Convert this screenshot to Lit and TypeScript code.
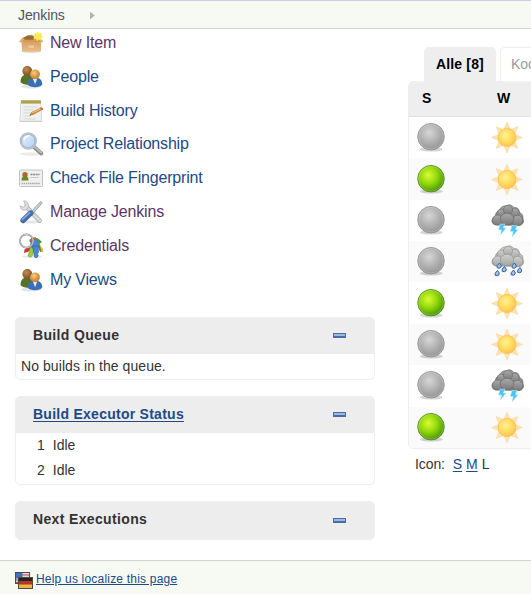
import { LitElement, html, css, svg } from "lit";
import { customElement } from "lit/decorators.js";
import { classMap } from "lit/directives/class-map.js";

const people = svg`
  <ellipse cx="12" cy="21.5" rx="10" ry="2" fill="#000" opacity=".1"/>
  <path d="M1.500 17c0-5 2.500-7.500 6.500-7.500 4 0 7 2.500 7 8-3 3-11 3-13.500-.5z" fill="#557327"/>
  <circle cx="8.300" cy="6" r="4.900" fill="url(#skinDark)"/>
  <path d="M8.500 19.500c0-5 3-7 7.500-7s7.300 2.500 7.300 7c-2.500 3.500-12 3.500-14.800 0z" fill="#3c6eb4"/>
  <path d="M13.800 13.200l2.300 6 2.200-6z" fill="#e6eefa"/>
  <circle cx="16" cy="9.300" r="4.900" fill="url(#skin)"/>`;

const sideIcons: Record<string, unknown> = {
  box: svg`
    <ellipse cx="12" cy="20.500" rx="10" ry="1.500" fill="#000" opacity=".15"/>
    <path d="M3.500 7L9 4.300h8l5 2.700v3H3z" fill="#9c6c37"/>
    <path d="M2.500 9h19.500v10.500q0 1-1 1h-17q-1 0-1-1z" fill="url(#carton)"/>
    <path d="M3.500 6.500L0 10.500l3.500 2 2.500-3.500zM21 6.500l3.500 4-3.800 2-2.700-3.500z" fill="#e2b175"/>
    <path d="M4 8.800h17l1 2.200H3z" fill="#d29a58"/>
    <path d="M9.500 14.500h5.500v2.500H9.500z" fill="#edc898"/>
    <path d="M19 .5l1.300 2.100 2.500-.6-.5 2.500 2 1.500-2.200 1.200.2 2.300-2.500-.7L18.200 10l-1.300-1.800-2.500.3.700-2.400-2-1.600 2.500-.7V1.800l2 .9z" fill="#f8ea52"/>`,
  people,
  notepad: svg`
    <path d="M1.500 2.500h20.500l1.200 19.500q0 1-1 1H1.500q-1 0-1-1z" fill="#c9cbca"/>
    <path d="M2 3.500h19.500l1 18.300H1.300z" fill="#f1f2f0"/>
    <path d="M2 1.500h20v3.300H2z" fill="#c7b65d"/>
    <path d="M3 1v3m2-3v3m2-3v3m2-3v3m2-3v3m2-3v3m2-3v3m2-3v3m2-3v3m2-3v3" stroke="#7b7c38" stroke-width=".7"/>
    <path d="M4.500 8h14m-14 3h10m-10 3h8m-8 3h7m-7 3h12" stroke="#c5cbd0" stroke-width=".7"/>
    <path d="M10.500 16.500l2-3.500L22 8.500q2 0 2 2L14 16z" fill="#c98742"/>
    <path d="M13.200 13.900L22.500 9.400" stroke="#f3ca83" stroke-width="1"/>
    <path d="M21 9l1-.5q2 0 2 2l-1 .6z" fill="#c95339"/>
    <path d="M10.500 16.500l.9-1.500.8.900z" fill="#333"/>`,
  magnifier: svg`
    <ellipse cx="12" cy="22" rx="11" ry="1.700" fill="#000" opacity=".08"/>
    <path d="M14.500 14.500l7.800 7" stroke="#8b8d8d" stroke-width="4" stroke-linecap="round"/>
    <path d="M14.800 14.200l7.500 6.500" stroke="#c4c6c6" stroke-width="1.500" stroke-linecap="round"/>
    <circle cx="9.300" cy="9" r="7.700" fill="url(#lens)" stroke="#bcc0c4" stroke-width="2"/>
    <circle cx="9.300" cy="9" r="6.600" fill="none" stroke="#8fb4e0" stroke-width=".8"/>
    <path d="M5 8q1-4 5.500-4.200" stroke="#fff" stroke-width="1.500" fill="none"/>`,
  card: svg`
    <rect x=".5" y="4" width="23" height="16.500" rx="1" fill="#f0f1ef" stroke="#c2c3c1"/>
    <rect x="2.500" y="6" width="7" height="8.500" fill="#dfe3cf"/>
    <path d="M2.500 14.500q0-4.500 3.500-4.500t3.500 4.500z" fill="#668c29"/>
    <circle cx="6" cy="8.700" r="2.600" fill="#a76936"/>
    <path d="M11.500 8.500h9" stroke="#888b88" stroke-width="1.500" stroke-dasharray="2 .6"/>
    <path d="M11.500 11.500h8" stroke="#c6c8c5"/>
    <path d="M2.500 17.500h19" stroke="#a9aca8" stroke-width="1.500" stroke-dasharray="1.500 .6"/>`,
  tools: svg`
    <ellipse cx="12" cy="22" rx="10" ry="1.600" fill="#000" opacity=".1"/>
    <path d="M7 6.500l13.500 14" stroke="#a2a5a5" stroke-width="4.600" stroke-linecap="round"/>
    <path d="M6.500 6l14 14.500" stroke="#d9dbda" stroke-width="3.200" stroke-linecap="round"/>
    <path d="M4.700.8q4.600.3 5.100 5.200-.5 4-4.300 4.300-3.800 0-4.500-4.500l3.300 1.600 2.300-2.300z" fill="#dddfde" stroke="#b2b5b5" stroke-width=".8"/>
    <path d="M12 12l8-8.900L22 1.500l1.200 1.200-1.600 2.300-7.900 8.700z" fill="#ccd0d3" stroke="#858b90" stroke-width=".7"/>
    <path d="M11.800 13L4 20.500" stroke="#3f6dae" stroke-width="5.400" stroke-linecap="round"/>
    <path d="M10.800 12.700L3.300 19.700" stroke="#86a9d8" stroke-width="1.600" stroke-linecap="round"/>`,
  keys: svg`
    <ellipse cx="13" cy="22.500" rx="10" ry="1.300" fill="#000" opacity=".1"/>
    <path d="M15 9L5.500 15.500l-.5 3.200 3.300-.4 8-5.500z" fill="#d4362c"/>
    <path d="M12 11l-3 11 2.500 1.500 2-2 1.700-8z" fill="#98cc48" stroke="#6ba33b" stroke-width=".5"/>
    <path d="M17 9l4.800 8.500 2.700.8-.7-3.200-4.500-7z" fill="#e2b52d"/>
    <path d="M18 10l3 8 1.500-.5-2.300-8z" fill="#508e35"/>
    <path d="M11.500 8.500q5.500-6 10 .7" fill="none" stroke="#4b973b" stroke-width="3.300"/>
    <path d="M11 7q2-3 6-2.700" fill="none" stroke="#e3572b" stroke-width="2"/>
    <circle cx="15.800" cy="10.500" r="4.500" fill="#4a85cc"/>
    <path d="M13.500 12l2 11 2 1 1.700-2-.7-2 1-1.500-.2-6.500z" fill="#4c87ce" stroke="#2f5e9c" stroke-width=".6"/>
    <circle cx="7.500" cy="7" r="6.600" fill="none" stroke="#808382" stroke-width="1.800"/>
    <circle cx="7.500" cy="7" r="6.600" fill="none" stroke="#e9eaea" stroke-width=".8"/>`,
};

const cloud = (fill: string, edge: string) => svg`
  <g fill=${fill} stroke=${edge} stroke-width=".6">
    <path d="M4.500 21q-4-1-3.500-5 .5-3 3.500-3.500Q4 8 8 7q2-5.500 7-5.300Q20-.7 23 3.500q5-.5 5.500 5 4 1.500 3.500 6 2 5-3 7z"/>
    <circle cx="10.500" cy="9.500" r="4.500"/><circle cx="23.500" cy="9" r="4.800"/>
    <circle cx="17" cy="6" r="4.600"/><circle cx="6.500" cy="16" r="5"/>
    <circle cx="26.500" cy="16.500" r="5.200"/><ellipse cx="16" cy="15" rx="6.800" ry="5.800"/>
  </g>`;

const drop = (x: number, y: number) => svg`
  <path transform="translate(${x} ${y})" d="M2 0q2.500 2.500 1.500 4.300Q2 6-.3 4.800-1.500 3 2 0z" fill="#9fbfe6" stroke="#36609f" stroke-width="1"/>`;

const ball = (fill: string, edge: string) => svg`
  <ellipse cx="16.300" cy="28.300" rx="11.500" ry="2.300" fill="#000" opacity=".16"/>
  <circle cx="16" cy="15.700" r="13.300" fill=${fill} stroke=${edge} stroke-width=".8"/>
  <circle cx="16" cy="15.700" r="12.300" fill="none" stroke="#fff" stroke-opacity=".25" stroke-width=".8"/>`;

const rowIcons: Record<string, unknown> = {
  grey: ball("url(#greyBall)", "#909090"),
  green: ball("url(#greenBall)", "#4c891c"),
  sun: svg`
    <g fill="#fde2ac" stroke="#f8d59a" stroke-width=".5">
      ${[0, 45, 90, 135, 180, 225, 270, 315].map(
        (a) => svg`<path transform="rotate(${a} 16 16.500)" d="M13 8L16 1l3 7z"/>`
      )}
    </g>
    <circle cx="16" cy="16.500" r="9" fill="url(#sunDisc)" stroke="#f5be5c" stroke-width=".8"/>`,
  storm: svg`
    ${cloud("url(#darkCloud)", "#686868")}
    <path d="M9 20h5l-1.700 4h2.700L9.500 31l1-5H7.500zM21 21.500h5l-1.500 4h2.700L21 33l1.200-5.500h-3z" fill="#4dc4f5" stroke="#c5edfc" stroke-width=".5"/>`,
  rain: svg`
    ${cloud("url(#lightCloud)", "#8f8f8d")}
    ${drop(6.500, 18)}${drop(11.500, 21.500)}${drop(4.500, 25.500)}${drop(21.500, 18)}${drop(27, 22.500)}${drop(20.500, 25)}`,
};

const defs = html`<svg class="defs" aria-hidden="true"><defs>
  <radialGradient id="skin" cx=".4" cy=".35"><stop offset="0" stop-color="#f8cd87"/><stop offset="1" stop-color="#d58a32"/></radialGradient>
  <radialGradient id="skinDark" cx=".4" cy=".35"><stop offset="0" stop-color="#c48d53"/><stop offset="1" stop-color="#8d5a29"/></radialGradient>
  <linearGradient id="carton" x2="0" y2="1"><stop offset="0" stop-color="#d59b59"/><stop offset="1" stop-color="#e7bd83"/></linearGradient>
  <linearGradient id="lens" x2="1" y2="1"><stop offset="0" stop-color="#e9f3fd"/><stop offset="1" stop-color="#b2cef0"/></linearGradient>
  <radialGradient id="greyBall" cx=".43" cy=".35" r=".65"><stop offset="0" stop-color="#d6d6d6"/><stop offset=".55" stop-color="#b2b2b2"/><stop offset="1" stop-color="#959595"/></radialGradient>
  <radialGradient id="greenBall" cx=".4" cy=".37" r=".65"><stop offset="0" stop-color="#dbfb35"/><stop offset=".5" stop-color="#93d90c"/><stop offset="1" stop-color="#499507"/></radialGradient>
  <radialGradient id="sunDisc" cx=".42" cy=".38" r=".62"><stop offset="0" stop-color="#fff197"/><stop offset=".6" stop-color="#ffdb5c"/><stop offset="1" stop-color="#fcc452"/></radialGradient>
  <linearGradient id="darkCloud" x2="0" y2="1"><stop offset="0" stop-color="#a9a9a9"/><stop offset="1" stop-color="#7b7b7b"/></linearGradient>
  <linearGradient id="lightCloud" x2="0" y2="1"><stop offset="0" stop-color="#cfcfcd"/><stop offset="1" stop-color="#a6a6a4"/></linearGradient>
</defs></svg>`;

const tasks = [
  { label: "New Item", icon: "box", visited: true },
  { label: "People", icon: "people", visited: false },
  { label: "Build History", icon: "notepad", visited: false },
  { label: "Project Relationship", icon: "magnifier", visited: false },
  { label: "Check File Fingerprint", icon: "card", visited: false },
  { label: "Manage Jenkins", icon: "tools", visited: true },
  { label: "Credentials", icon: "keys", visited: true },
  { label: "My Views", icon: "people", visited: false },
];

const jobs = [
  ["grey", "sun"], ["green", "sun"], ["grey", "storm"], ["grey", "rain"],
  ["green", "sun"], ["grey", "sun"], ["grey", "storm"], ["green", "sun"],
];

@customElement("app-root")
export class AppRoot extends LitElement {
  static styles = css`
    :host {
      display: flex; flex-direction: column; height: 594px; overflow: hidden;
      background: #fff; color: #333; font: 14px/16px "Liberation Sans", Arial, sans-serif;
      box-sizing: border-box; position: relative;
    }
    * { box-sizing: border-box; }
    svg { display: block; overflow: visible; flex: none; }
    .defs { position: absolute; width: 0; height: 0; }
    .crumbs {
      flex: none; height: 29px; display: flex; align-items: center; gap: 25px; padding: 0 0 0 18px;
      background: #f6faf2; border-top: 1px solid #c5d0e0; border-bottom: 1px solid #d3d4d0; color: #4d545d;
      letter-spacing: -.1px;
    }
    .arrow { width: 5px; height: 8px; background: #b1b5b0; clip-path: polygon(0 0, 100% 50%, 0 100%); margin-top: 2px; }
    .body { flex: 1; display: flex; gap: 33px; min-height: 0; }
    .side { flex: none; width: 375px; padding: 0 0 0 15px; }
    .tasks { display: flex; flex-direction: column; padding-left: 4px; margin-top: -3px; height: 270.700px; }
    .task { flex: 1; display: flex; align-items: center; gap: 7px; font-size: 16px; letter-spacing: -.18px; color: #204a87; }
    .visited { color: #5c3566; }
    .panels { display: flex; flex-direction: column; gap: 16px; margin-top: 20.300px; }
    .panel { border: 1px solid #eee; border-radius: 5px; overflow: hidden; }
    .head { height: 36px; display: flex; align-items: center; justify-content: space-between; background: #ededed; padding: 0 28px 0 17px; }
    .title { font-weight: bold; letter-spacing: .35px; padding-bottom: 2px; }
    .link { color: #204a87; text-decoration: underline; text-underline-offset: 2px; }
    .title.link { letter-spacing: .26px; }
    .minus { width: 13px; height: 5px; background: #9db9dd; border: 1px solid #4a6ca5; border-bottom-width: 2px; }
    .empty { height: 25px; padding: 4px 5px; letter-spacing: .07px; }
    .execs { height: 51px; padding-left: 21px; display: flex; flex-direction: column; }
    .exec { height: 25px; display: flex; align-items: center; gap: 8px; }
    .last .head { height: 37px; }
    .main { flex: none; width: 200px; padding-top: 18px; }
    .tabs { display: flex; gap: 4px; padding-left: 16px; height: 34px; }
    .tab { height: 34px; border: 1px solid #eee; border-bottom: 0; border-radius: 5px 5px 0 0; padding: 8px 10px; color: #999; }
    .active { width: 72px; padding: 8px 0 8px 11px; background: #eee; color: #000; font-weight: bold; letter-spacing: .15px; }
    .table { border: 1px solid #eee; border-radius: 5px 0 0 5px; overflow: hidden; }
    .cols, .row { display: grid; grid-template-columns: 76px 1fr; align-items: center; }
    .cols { grid-template-columns: 75px 1fr; height: 35px; background: #eee; border-bottom: 1px solid #e2e2e2; color: #000; font-weight: bold; padding: 0 0 2px 13px; }
    .row { height: 41.370px; padding-left: 5.500px; }
    .row:nth-child(odd) { background: #fafafa; }
    .sizes { display: flex; gap: 4px; padding: 7px 0 0 7px; letter-spacing: -.1px; }
    .sizes .first { margin-left: 4px; }
    .foot { flex: none; height: 34px; background: #f6faf2; border-top: 1px solid #d3d4d0; display: flex; align-items: center; gap: 3px; padding: 4px 0 0 15px; font-size: 12px; }
    .foot .link { text-underline-offset: 1px; letter-spacing: .2px; padding-bottom: 2px; }
  `;

  private panel(title: string, content: unknown, cls = "", link = false) {
    return html`<section class="panel ${cls}">
      <div class="head"><span class=${classMap({ title: true, link })}>${title}</span><span class="minus"></span></div>
      ${content}
    </section>`;
  }

  render() {
    return html`${defs}
      <nav class="crumbs"><span>Jenkins</span><span class="arrow"></span></nav>
      <div class="body">
        <aside class="side">
          <div class="tasks">
            ${tasks.map((t) => html`<a class=${classMap({ task: true, visited: t.visited })}>
              <svg width="24" height="24" viewBox="0 0 24 24">${sideIcons[t.icon]}</svg><span>${t.label}</span></a>`)}
          </div>
          <div class="panels">
            ${this.panel("Build Queue", html`<div class="empty">No builds in the queue.</div>`)}
            ${this.panel("Build Executor Status", html`<div class="execs">
              ${[1, 2].map((n) => html`<div class="exec"><span>${n}</span><span>Idle</span></div>`)}</div>`, "", true)}
            ${this.panel("Next Executions", "", "last")}
          </div>
        </aside>
        <main class="main">
          <div class="tabs"><span class="tab active">Alle [8]</span><span class="tab">Koordination</span></div>
          <div class="table">
            <div class="cols"><span>S</span><span>W</span></div>
            ${jobs.map((icons) => html`<div class="row">
              ${icons.map((i) => html`<svg width="33" height="33" viewBox="0 0 33 33">${rowIcons[i]}</svg>`)}</div>`)}
          </div>
          <div class="sizes"><span>Icon:</span><a class="link first">S</a><a class="link">M</a><span>L</span></div>
        </main>
      </div>
      <footer class="foot">
        <svg width="18" height="18" viewBox="0 0 18 18">
          <rect x=".5" y="1.500" width="14" height="11" fill="#e6d7d8" stroke="#4b4b55"/>
          <path d="M1 4h13M1 6.500h13M1 9h13M1 11.500h13" stroke="#c44a4c" stroke-width="1.200"/>
          <rect x="1" y="2" width="6.500" height="5.500" fill="#4472ae"/>
          <rect x="3.500" y="6.500" width="14" height="11" fill="#252323" stroke="#4a4744"/>
          <path d="M4 10h13v4H4z" fill="#b83325"/><path d="M4 13.500h13V17H4z" fill="#ebb545"/>
        </svg>
        <a class="link">Help us localize this page</a>
      </footer>`;
  }
}
